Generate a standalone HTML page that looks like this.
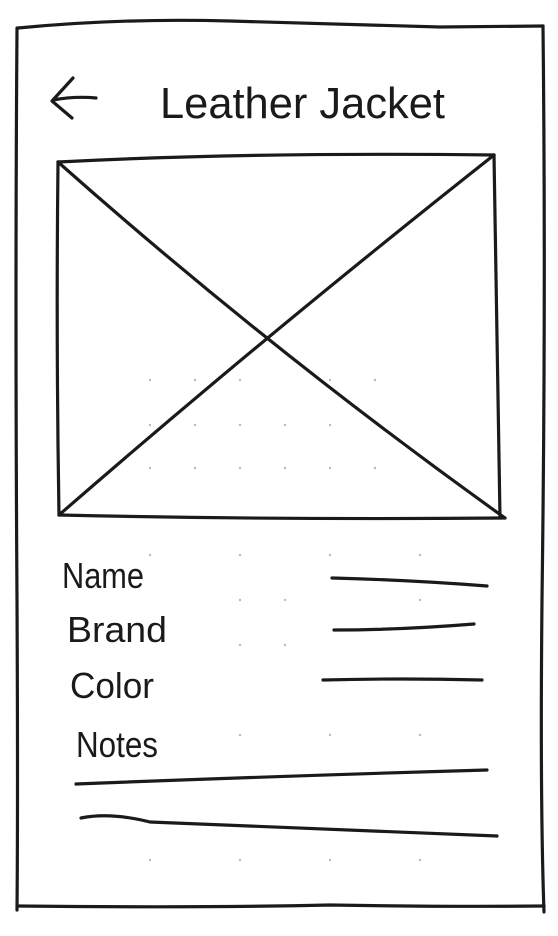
<!DOCTYPE html>
<html><head><style>
html,body{margin:0;padding:0;background:#fff;width:558px;height:936px;overflow:hidden}
svg{display:block}
text{font-family:"Liberation Sans",sans-serif;fill:#1a1a1a}
</style></head><body>
<svg width="558" height="936" viewBox="0 0 558 936">
<g fill="#bbb">
<circle cx="150" cy="380" r="1.2"/><circle cx="195" cy="380" r="1.2"/><circle cx="240" cy="380" r="1.2"/><circle cx="330" cy="380" r="1.2"/><circle cx="375" cy="380" r="1.2"/>
<circle cx="150" cy="425" r="1.2"/><circle cx="195" cy="425" r="1.2"/><circle cx="240" cy="425" r="1.2"/><circle cx="285" cy="425" r="1.2"/><circle cx="330" cy="425" r="1.2"/>
<circle cx="150" cy="468" r="1.2"/><circle cx="195" cy="468" r="1.2"/><circle cx="240" cy="468" r="1.2"/><circle cx="285" cy="468" r="1.2"/><circle cx="330" cy="468" r="1.2"/><circle cx="375" cy="468" r="1.2"/>
<circle cx="150" cy="555" r="1.2"/><circle cx="240" cy="555" r="1.2"/><circle cx="330" cy="555" r="1.2"/><circle cx="420" cy="555" r="1.2"/>
<circle cx="240" cy="600" r="1.2"/><circle cx="285" cy="600" r="1.2"/><circle cx="420" cy="600" r="1.2"/>
<circle cx="240" cy="645" r="1.2"/><circle cx="285" cy="645" r="1.2"/>
<circle cx="240" cy="735" r="1.2"/><circle cx="330" cy="735" r="1.2"/><circle cx="420" cy="735" r="1.2"/>
<circle cx="150" cy="860" r="1.2"/><circle cx="240" cy="860" r="1.2"/><circle cx="330" cy="860" r="1.2"/><circle cx="420" cy="860" r="1.2"/>
</g>
<g fill="none" stroke="#1a1a1a" stroke-width="3.2" stroke-linecap="round" stroke-linejoin="round">
<path d="M18 28 Q120 18 230 21 Q330 24 440 27 L543 26"/>
<path d="M17 28 Q15 300 17 600 Q18 800 17 910"/>
<path d="M543 26 Q546 300 542 600 Q540 800 544 912"/>
<path d="M17 906 Q200 908 330 905 Q450 907 544 906"/>
<path d="M73 78 L52 101 L72 118 M53 100 Q75 96 96 98"/>
<path d="M58 162 Q250 152 494 155"/>
<path d="M58 162 Q56 340 59 515"/>
<path d="M494 155 Q497 330 500 518"/>
<path d="M59 515 Q280 520 505 518"/>
<path d="M58 162 Q270 350 505 518"/>
<path d="M494 155 Q260 340 59 515"/>
<path d="M332 578 Q410 580 487 586"/>
<path d="M334 630 Q400 630 474 624"/>
<path d="M323 680 Q400 678 482 680"/>
<path d="M76 784 Q280 776 487 770"/>
<path d="M81 818 Q110 812 150 822 Q300 828 497 836"/>
</g>
<text x="160" y="118" font-size="44" textLength="285" lengthAdjust="spacingAndGlyphs">Leather Jacket</text>
<text x="62" y="588" font-size="36" textLength="82" lengthAdjust="spacingAndGlyphs">Name</text>
<text x="67" y="642" font-size="36" textLength="100" lengthAdjust="spacingAndGlyphs">Brand</text>
<text x="70" y="698" font-size="36" textLength="84" lengthAdjust="spacingAndGlyphs">Color</text>
<text x="76" y="757" font-size="36" textLength="82" lengthAdjust="spacingAndGlyphs">Notes</text>
</svg>
</body></html>
